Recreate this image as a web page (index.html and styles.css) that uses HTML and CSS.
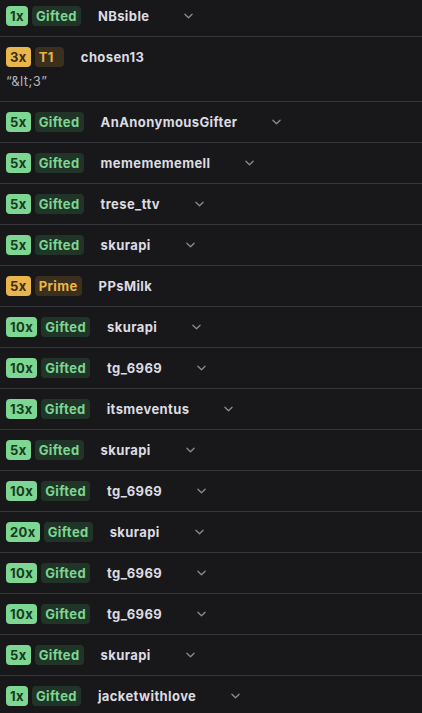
FILE: index.html
```html
<!DOCTYPE html>
<html>
<head>
<meta charset="utf-8">
<link rel="stylesheet" href="styles.css">
</head>
<body>
<div class="list">
  <div class="row"><div class="line"><span class="b cnt g">1x</span><span class="b kind g">Gifted</span><span class="name">NBsible</span><svg class="chev" viewBox="0 0 10 6"><path d="M1 1l4 4 4-4"/></svg></div></div>
  <div class="row"><div class="line"><span class="b cnt y">3x</span><span class="b kind y tier">T1</span><span class="name">chosen13</span></div><div class="msg">“&amp;lt;3”</div></div>
  <div class="row"><div class="line"><span class="b cnt g">5x</span><span class="b kind g">Gifted</span><span class="name">AnAnonymousGifter</span><svg class="chev" viewBox="0 0 10 6"><path d="M1 1l4 4 4-4"/></svg></div></div>
  <div class="row"><div class="line"><span class="b cnt g">5x</span><span class="b kind g">Gifted</span><span class="name">mememememell</span><svg class="chev" viewBox="0 0 10 6"><path d="M1 1l4 4 4-4"/></svg></div></div>
  <div class="row"><div class="line"><span class="b cnt g">5x</span><span class="b kind g">Gifted</span><span class="name">trese_ttv</span><svg class="chev" viewBox="0 0 10 6"><path d="M1 1l4 4 4-4"/></svg></div></div>
  <div class="row"><div class="line"><span class="b cnt g">5x</span><span class="b kind g">Gifted</span><span class="name">skurapi</span><svg class="chev" viewBox="0 0 10 6"><path d="M1 1l4 4 4-4"/></svg></div></div>
  <div class="row"><div class="line"><span class="b cnt y">5x</span><span class="b kind y">Prime</span><span class="name">PPsMilk</span></div></div>
  <div class="row"><div class="line"><span class="b cnt g">10x</span><span class="b kind g">Gifted</span><span class="name">skurapi</span><svg class="chev" viewBox="0 0 10 6"><path d="M1 1l4 4 4-4"/></svg></div></div>
  <div class="row"><div class="line"><span class="b cnt g">10x</span><span class="b kind g">Gifted</span><span class="name">tg_6969</span><svg class="chev" viewBox="0 0 10 6"><path d="M1 1l4 4 4-4"/></svg></div></div>
  <div class="row"><div class="line"><span class="b cnt g">13x</span><span class="b kind g">Gifted</span><span class="name">itsmeventus</span><svg class="chev" viewBox="0 0 10 6"><path d="M1 1l4 4 4-4"/></svg></div></div>
  <div class="row"><div class="line"><span class="b cnt g">5x</span><span class="b kind g">Gifted</span><span class="name">skurapi</span><svg class="chev" viewBox="0 0 10 6"><path d="M1 1l4 4 4-4"/></svg></div></div>
  <div class="row"><div class="line"><span class="b cnt g">10x</span><span class="b kind g">Gifted</span><span class="name">tg_6969</span><svg class="chev" viewBox="0 0 10 6"><path d="M1 1l4 4 4-4"/></svg></div></div>
  <div class="row"><div class="line"><span class="b cnt g">20x</span><span class="b kind g">Gifted</span><span class="name">skurapi</span><svg class="chev" viewBox="0 0 10 6"><path d="M1 1l4 4 4-4"/></svg></div></div>
  <div class="row"><div class="line"><span class="b cnt g">10x</span><span class="b kind g">Gifted</span><span class="name">tg_6969</span><svg class="chev" viewBox="0 0 10 6"><path d="M1 1l4 4 4-4"/></svg></div></div>
  <div class="row"><div class="line"><span class="b cnt g">10x</span><span class="b kind g">Gifted</span><span class="name">tg_6969</span><svg class="chev" viewBox="0 0 10 6"><path d="M1 1l4 4 4-4"/></svg></div></div>
  <div class="row"><div class="line"><span class="b cnt g">5x</span><span class="b kind g">Gifted</span><span class="name">skurapi</span><svg class="chev" viewBox="0 0 10 6"><path d="M1 1l4 4 4-4"/></svg></div></div>
  <div class="row"><div class="line"><span class="b cnt g">1x</span><span class="b kind g">Gifted</span><span class="name">jacketwithlove</span><svg class="chev" viewBox="0 0 10 6"><path d="M1 1l4 4 4-4"/></svg></div></div>
</div>
</body>
</html>
```
FILE: styles.css
```css
html, body {
  margin: 0;
  padding: 0;
  background: #18181b;
  overflow: hidden;
}
body {
  font-family: Inter, "Noto Sans", sans-serif;
  font-size: 13px;
  letter-spacing: 0.4px;
  color: #dedee3;
}
.list {
  margin-top: -4px;
}
.row {
  padding: 10px 6px;
  border-bottom: 1px solid #35353b;
}
.line {
  display: flex;
  align-items: center;
  gap: 4px;
  height: 20px;
}
.b {
  display: inline-block;
  height: 20px;
  line-height: 20px;
  padding: 0 4px;
  border-radius: 4px;
  font-weight: 700;
  font-size: 13px;
}
.b.tier {
  padding-right: 10px;
}
.cnt.g { background: #7dd692; color: #173a21; }
.kind.g { background: #203527; color: #7dd692; }
.cnt.y { background: #e8b64c; color: #3d2c08; }
.kind.y { background: #3a301d; color: #e8b64c; }
.name {
  margin-left: 13px;
  font-weight: 700;
  color: #dcdce1;
}
.chev {
  width: 9px;
  height: 6px;
  margin-left: 31px;
  fill: none;
  stroke: #8b8b92;
  stroke-width: 1.4;
  stroke-linecap: round;
  stroke-linejoin: round;
}
.msg {
  margin-top: 4px;
  line-height: 20px;
  color: #b4b4bb;
}
```
